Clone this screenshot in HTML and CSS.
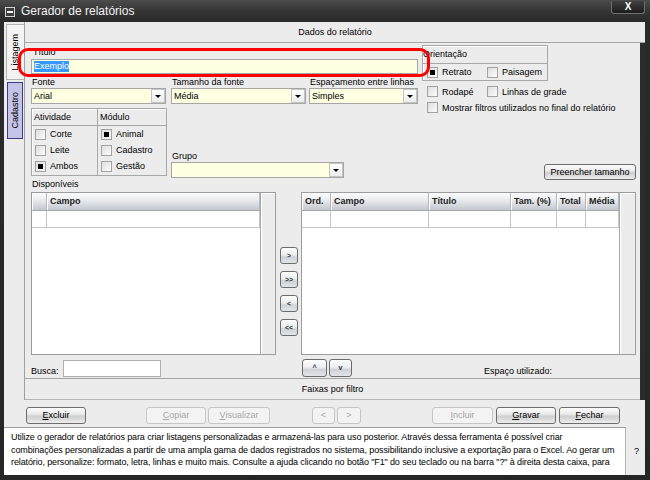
FILE: index.html
```html
<!DOCTYPE html>
<html lang="pt-BR">
<head>
<meta charset="utf-8">
<title>Gerador de relatórios</title>
<link rel="stylesheet" href="styles.css">
</head>
<body>
<div class="window">
  <div class="titlebar">
    <span class="sysbtn"></span>
    <span class="title">Gerador de relatórios</span>
    <span class="close">X</span>
  </div>
  <div class="client">
    <div class="top">
      <div class="tabs">
        <div class="tab tab-on"><span class="vtext">Listagem</span></div>
        <div class="tab tab-off"><span class="vtext">Cadastro</span></div>
      </div>
      <div class="panel">
        <div class="bar bar-head">Dados do relatório</div>
        <div class="body">
          <div class="upper">
            <div class="leftcol">
              <div class="lbl lbl-title">Título</div>
              <div class="textbox"><span class="sel">Exemplo</span></div>
              <div class="row3">
                <div class="field f-fonte"><div class="lbl">Fonte</div><div class="combo"><span class="cval">Arial</span><span class="carrow"></span></div></div>
                <div class="field f-tam"><div class="lbl">Tamanho da fonte</div><div class="combo"><span class="cval">Média</span><span class="carrow"></span></div></div>
                <div class="field f-esp"><div class="lbl">Espaçamento entre linhas</div><div class="combo"><span class="cval">Simples</span><span class="carrow"></span></div></div>
              </div>
              <div class="row4">
                <div class="groupbox">
                  <div class="gcol gcol-a">
                    <div class="ghead">Atividade</div>
                    <div class="chk chk-row"><i class="box"></i>Corte</div>
                    <div class="chk chk-row"><i class="box"></i>Leite</div>
                    <div class="chk chk-row"><i class="box on"></i>Ambos</div>
                  </div>
                  <div class="gcol gcol-m">
                    <div class="ghead">Módulo</div>
                    <div class="chk chk-row"><i class="box on"></i>Animal</div>
                    <div class="chk chk-row"><i class="box"></i>Cadastro</div>
                    <div class="chk chk-row"><i class="box"></i>Gestão</div>
                  </div>
                </div>
                <div class="field f-grupo"><div class="lbl">Grupo</div><div class="combo"><span class="cval"></span><span class="carrow"></span></div></div>
              </div>
            </div>
            <div class="rightcol">
              <div class="orient">
                <div class="ohead">Orientação</div>
                <div class="orow">
                  <div class="chk chk-w"><i class="box on"></i>Retrato</div>
                  <div class="chk"><i class="box"></i>Paisagem</div>
                </div>
              </div>
              <div class="opts opts-1">
                <div class="chk chk-w"><i class="box"></i>Rodapé</div>
                <div class="chk"><i class="box"></i>Linhas de grade</div>
              </div>
              <div class="opts opts-2">
                <div class="chk chk-wide"><i class="box"></i>Mostrar filtros utilizados no final do relatório</div>
              </div>
              <button class="btn btn-fill">Preencher tamanho</button>
            </div>
          </div>
          <div class="lbl lbl-disp">Disponíveis</div>
          <div class="lists">
            <div class="grid grid-left">
              <div class="gmain">
                <div class="ghrow">
                  <div class="gh gh-ind"></div>
                  <div class="gh gh-fill">Campo</div>
                </div>
                <div class="gdrow">
                  <div class="gd gh-ind"></div>
                  <div class="gd gh-fill"></div>
                </div>
              </div>
              <div class="gscroll"></div>
            </div>
            <div class="movers">
              <button class="mbtn">&gt;</button>
              <button class="mbtn">&gt;&gt;</button>
              <button class="mbtn">&lt;</button>
              <button class="mbtn">&lt;&lt;</button>
            </div>
            <div class="grid grid-right">
              <div class="gmain gmain-r">
                <div class="ghrow">
                  <div class="gh c-ord">Ord.</div>
                  <div class="gh c-campo">Campo</div>
                  <div class="gh c-tit">Título</div>
                  <div class="gh c-tam">Tam. (%)</div>
                  <div class="gh c-tot">Total</div>
                  <div class="gh c-med">Média</div>
                </div>
                <div class="gdrow">
                  <div class="gd c-ord"></div>
                  <div class="gd c-campo"></div>
                  <div class="gd c-tit"></div>
                  <div class="gd c-tam"></div>
                  <div class="gd c-tot"></div>
                  <div class="gd c-med"></div>
                </div>
              </div>
              <div class="gscroll gscroll-r"></div>
            </div>
          </div>
          <div class="lower">
            <span class="lbl lbl-busca">Busca:</span>
            <div class="searchbox"></div>
            <button class="mbtn ubtn ubtn-up">^</button>
            <button class="mbtn ubtn ubtn-dn">v</button>
            <span class="lbl used">Espaço utilizado:</span>
          </div>
        </div>
        <div class="bar bar-foot">Faixas por filtro</div>
      </div>
    </div>
    <div class="actions">
      <button class="btn b-excluir"><u>E</u>xcluir</button>
      <button class="btn dis b-copiar"><u>C</u>opiar</button>
      <button class="btn dis b-visual"><u>V</u>isualizar</button>
      <button class="btn dis b-prev">&lt;</button>
      <button class="btn dis b-next">&gt;</button>
      <button class="btn dis b-incluir"><u>I</u>ncluir</button>
      <button class="btn b-gravar"><u>G</u>ravar</button>
      <button class="btn b-fechar"><u>F</u>echar</button>
    </div>
    <div class="help">
      <div class="helptext">Utilize o gerador de relatórios para criar listagens personalizadas e armazená-las para uso posterior. Através dessa ferramenta é possível criar<br>combinações personalizadas a partir de uma ampla gama de dados registrados no sistema, possibilitando inclusive a exportação para o Excel. Ao gerar um<br>relatório, personalize: formato, letra, linhas e muito mais. Consulte a ajuda clicando no botão "F1" do seu teclado ou na barra "?" à direita desta caixa, para</div>
      <div class="helpq">?</div>
    </div>
  </div>
  <div class="highlight"></div>
</div>
</body>
</html>
```

FILE: styles.css
```css
* { box-sizing: border-box; }
html, body { margin: 0; padding: 0; }
body {
  width: 650px; height: 480px; overflow: hidden;
  font-family: "Liberation Sans", Arial, sans-serif;
  font-size: 9px; color: #000; background: #1f1f1f;
}
button { font: inherit; margin: 0; padding: 0; color: inherit; }

.window {
  position: relative;
  width: 650px; height: 480px;
  display: flex; flex-direction: column;
  background: linear-gradient(#4c4c4c 0, #353535 11px, #2a2a2a 22px, #262626 100%);
}

/* title bar */
.titlebar { height: 22px; flex: none; display: flex; align-items: flex-start; }
.sysbtn {
  position: relative; width: 10px; height: 10px; margin: 7px 0 0 5px;
  border: 1px solid #d4d4d4; background: #3c3c3c;
}
.sysbtn::after {
  content: ""; position: absolute; left: 1px; right: 1px; top: 3px; height: 2px; background: #f4f4f4;
}
.title { margin: 4px 0 0 6px; color: #f2f2f2; font-size: 12px; line-height: 14px; }
.close {
  margin: 1px 5px 0 auto; width: 34px; height: 13px;
  border: 1px solid #707070; border-top: none; border-radius: 0 0 3px 3px;
  background: linear-gradient(#404040, #1c1c1c);
  color: #fff; font-weight: bold; font-size: 10px; line-height: 12px; text-align: center;
}

/* client area */
.client {
  flex: none; width: 641px; height: 453px; margin-left: 4px;
  display: flex; flex-direction: column; background: #ececec;
}
.top { height: 378px; flex: none; display: flex; background: #2c2c2c; }
.tabs { width: 20px; flex: none; background: #ececec; display: flex; flex-direction: column; }
.tab { display: flex; align-items: center; justify-content: center; }
.vtext { writing-mode: vertical-rl; transform: rotate(180deg); white-space: nowrap; line-height: 11px; }
.tab-on {
  margin: 2px 0 0 2px; width: 18px; height: 56px;
  border: 1px solid #b4b4b4; border-right: none; background: #f3f3f3;
}
.tab-off {
  margin: 2px 0 0 3px; width: 16px; height: 57px;
  border: 1px solid #3c3c7c; background: #c4c4e8;
}

.panel {
  width: 621px; flex: none; display: flex; flex-direction: column;
  border-left: 1px solid #a0a0a0; background: #2c2c2c;
}
.bar {
  text-align: center; background: #ececec; white-space: nowrap;
}
.bar-head { height: 21px; line-height: 20px; border-bottom: 1px solid #a4a4a4; }
.bar-foot {
  width: 615px; height: 22px; line-height: 20px;
  border-top: 1px solid #a4a4a4; border-bottom: 1px solid #b4b4b4;
}
.body {
  width: 615px; height: 335px; background: #ececec;
  padding: 0 4px 0 6px; display: flex; flex-direction: column;
}

.lbl { line-height: 11px; height: 11px; white-space: nowrap; padding-left: 1px; }

/* upper block */
.upper { height: 136px; flex: none; display: flex; }
.leftcol { width: 387px; display: flex; flex-direction: column; }
.lbl-title { margin-top: 4px; padding-left: 2px; }
.textbox {
  margin-top: 1px; height: 15px; border: 1px solid #a6a6a6; background: #ffffe1;
  display: flex; align-items: center; padding-left: 2px;
}
.sel { background: #3399ff; color: #fff; line-height: 11px; }
.row3 { display: flex; margin-top: 3px; }
.field { display: flex; flex-direction: column; }
.f-fonte { width: 135px; }
.f-tam { width: 135px; margin-left: 5px; }
.f-esp { width: 109px; margin-left: 3px; }
.combo {
  height: 16px; border: 1px solid #a6a6a6; background: #ffffe1;
  display: flex; align-items: stretch;
}
.cval { flex: 1; padding-left: 2px; line-height: 14px; }
.carrow {
  position: relative; width: 14px; flex: none;
  border: 1px solid #c4c4c4; background: linear-gradient(#ffffff, #ececec);
}
.carrow::after {
  content: ""; position: absolute; left: 3px; top: 5px;
  border-top: 3px solid #000; border-left: 3px solid transparent; border-right: 3px solid transparent;
}
.row4 { display: flex; margin-top: 4px; }
.groupbox {
  width: 136px; height: 68px; display: flex;
  border: 1px solid #a8a8a8; box-shadow: inset 1px 1px #fff;
}
.gcol { display: flex; flex-direction: column; }
.gcol-a { width: 66px; border-right: 1px solid #a8a8a8; }
.gcol-m { flex: 1; }
.ghead { height: 17px; line-height: 17px; padding-left: 2px; border-bottom: 1px solid #a8a8a8; }
.chk { display: flex; align-items: center; white-space: nowrap; }
.chk-row { height: 16px; padding-left: 3px; }
.box {
  position: relative; flex: none; width: 11px; height: 11px; margin-right: 4px;
  border: 1px solid #a2a2a2; background: linear-gradient(135deg, #dedede, #fcfcfc);
}
.box.on::after {
  content: ""; position: absolute; left: 2px; top: 2px; width: 5px; height: 5px; background: #000;
}
.f-grupo { width: 173px; margin-left: 4px; padding-top: 43px; }

.rightcol { width: 214px; margin-left: 4px; display: flex; flex-direction: column; }
.orient {
  margin-top: 2px; width: 126px; height: 36px;
  border: 1px solid #a8a8a8; box-shadow: inset 1px 1px #fff;
}
.ohead { height: 18px; line-height: 17px; border-bottom: 1px solid #a8a8a8; white-space: nowrap; }
.orow { height: 16px; display: flex; align-items: center; padding-left: 4px; }
.chk-w { width: 60px; }
.opts { display: flex; height: 11px; padding-left: 5px; margin-top: 5px; }
.btn {
  height: 17px; border: 1px solid #6c6c6c; border-radius: 3px;
  background: linear-gradient(#fbfbfb 0%, #ebebeb 40%, #cfcfcf 55%, #dedede 80%, #efefef 100%);
  text-align: center; line-height: 15px; white-space: nowrap;
}
.btn-fill { align-self: flex-end; margin-top: 51px; width: 92px; height: 16px; line-height: 14px; }

/* lists */
.lbl-disp { margin-top: 0; }
.lists { display: flex; margin-top: 2px; height: 163px; flex: none; }
.grid { display: flex; height: 163px; border: 1px solid #9d9d9d; background: #ececec; }
.grid-left { width: 245px; }
.grid-right { width: 335px; margin-left: 3px; }
.gmain { flex: 1; background: #fff; display: flex; flex-direction: column; }
.gmain-r { flex: none; width: 317px; }
.gscroll { width: 15px; flex: none; border-left: 1px solid #a8a8a8; background: #ececec; box-shadow: inset 1px 1px #fff; }
.gscroll-r { width: 16px; }
.ghrow {
  display: flex; height: 18px; border-bottom: 1px solid #a8a8a8;
  background: linear-gradient(#fbfbfc 0%, #eeeff1 35%, #d3d6dc 75%, #c3c7ce 100%);
}
.gh {
  flex: none; border-right: 1px solid #b2b6be; box-shadow: inset 1px 0 #fff;
  font-weight: bold; color: #1e1e1e; padding-left: 3px; line-height: 17px;
  white-space: nowrap; overflow: hidden;
}
.gdrow { display: flex; height: 17px; border-bottom: 1px solid #c6c6c6; }
.gd { flex: none; border-right: 1px solid #c6c6c6; }
.gh-ind { width: 15px; }
.gh-fill { flex: 1; padding-left: 3px; }
.c-ord { width: 29px; }
.c-campo { width: 98px; }
.c-tit { width: 82px; }
.c-tam { width: 46px; }
.c-tot { width: 29px; }
.c-med { width: 33px; }

.movers { width: 18px; margin-left: 4px; padding-top: 55px; display: flex; flex-direction: column; gap: 7px; }
.mbtn {
  width: 18px; height: 17px; border: 1px solid #6c6c6c; border-radius: 3px;
  background: linear-gradient(#fdfdfd 0%, #eceef0 45%, #cfd3d8 60%, #e2e4e7 100%);
  font-size: 7px; font-weight: bold; line-height: 15px; text-align: center; color: #303030;
}

/* lower row */
.lower { display: flex; align-items: flex-start; padding-top: 4px; height: 23px; flex: none; }
.lbl-busca { width: 32px; margin-top: 7px; padding-left: 0; }
.searchbox { width: 98px; height: 17px; margin-top: 1px; border: 1px solid #b0b0b0; background: #fff; }
.ubtn { height: 18px; line-height: 16px; }
.ubtn-up { width: 25px; margin-left: 141px; }
.ubtn-dn { width: 23px; margin-left: 2px; }
.used { margin-left: 131px; margin-top: 7px; }

/* action buttons */
.actions { height: 27px; flex: none; display: flex; align-items: flex-start; padding: 7px 0 0 22px; background: #ececec; }
.btn.dis { border-color: #c6c6c6; background: #f3f3f3; color: #a8a8a8; }
.b-excluir { width: 60px; }
.b-copiar { width: 60px; margin-left: 60px; }
.b-visual { width: 62px; margin-left: 2px; }
.b-prev { width: 23px; margin-left: 42px; }
.b-next { width: 24px; margin-left: 2px; }
.b-incluir { width: 61px; margin-left: 71px; }
.b-gravar { width: 60px; margin-left: 3px; }
.b-fechar { width: 61px; margin-left: 3px; }

/* help */
.help { height: 48px; flex: none; display: flex; }
.helptext {
  width: 622px; flex: none; background: #fff; overflow: hidden; white-space: nowrap;
  border-top: 1px solid #9c9c9c; border-right: 1px solid #b4b4b4;
  padding: 3px 0 0 7px; line-height: 12.5px; letter-spacing: -0.12px;
}
.helpq { flex: 1; display: flex; align-items: center; justify-content: center; padding-left: 2px; }

/* red annotation overlay */
.highlight {
  position: absolute; left: 18px; top: 48px; width: 412px; height: 29px;
  border: 3px solid #ff0000; border-radius: 10px;
}
```
